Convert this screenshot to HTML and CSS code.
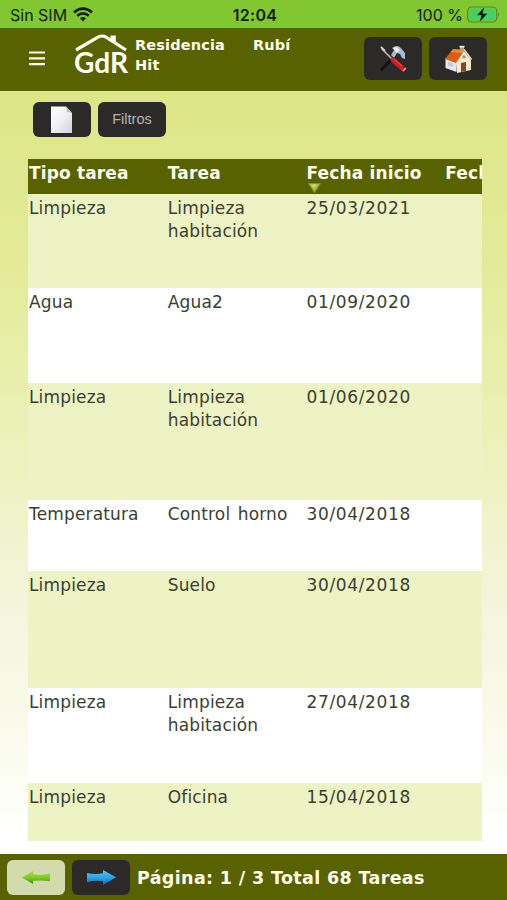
FILE: index.html
```
<!DOCTYPE html>
<html lang="es">
<head>
    <meta charset="UTF-8">
    <meta name="viewport" content="width=device-width, initial-scale=1.0">
    <title>GdR - Tareas</title>
    <link rel="stylesheet" href="styles.css">
</head>
<body>

    <div class="status">
        <div class="carrier">
            <span>Sin SIM</span>
            <svg width="20" height="15" viewBox="0 0 20 15" fill="none" stroke="#10230b" stroke-width="2.7">
                <path d="M1 5.4Q10-2.2 19 5.4"/>
                <path d="M4.2 8.8Q10 3.8 15.8 8.8"/>
                <path d="M7 11.2Q10 8.6 13 11.2L10 14.4z" fill="#10230b" stroke="none"/>
            </svg>
        </div>
        <div class="clock">12:04</div>
        <div class="battery">
            <span>100 %</span>
            <svg width="33" height="17" viewBox="0 0 33 17">
                <rect x=".7" y="1" width="29" height="15" rx="4" fill="#7cc532" stroke="#56892f" stroke-width="1.2"/>
                <rect x="2.5" y="2.8" width="25.4" height="11.4" rx="2.5" fill="#43d160"/>
                <path d="M31 6.2q2 2.3 0 4.6z" fill="#56892f"/>
                <path d="M18 0L9.5 9.5h4.8L12 17l8.8-9.7h-5z" fill="#0b1a0b" stroke="#7ddc78" stroke-width=".5"/>
            </svg>
        </div>
    </div>

    <header>
        <svg class="menu" width="16" height="15" viewBox="0 0 16 15" stroke="#fdfdea" stroke-width="2.2">
            <path d="M0 1.5h16M0 7.3h16M0 13.2h16"/>
        </svg>
        <svg class="logo" width="58" height="46" viewBox="0 0 58 46">
            <path d="M3 17L25 4.2Q29 1.8 33 4.2L53 17" fill="none" stroke="#fffff4" stroke-width="3.2"/>
            <path d="M37.5 2.5h5.3v9l-5.3-3.5z" fill="#fffff4"/>
            <text x="1" y="40" textLength="54" lengthAdjust="spacingAndGlyphs">GdR</text>
        </svg>
        <div class="center"><span class="first">Residencia</span><span>Rubí</span><br>Hit</div>
        <div class="btn tools">
            <svg width="28" height="28" viewBox="0 0 28 28">
                <path d="M2 25L16 11" stroke="#101113" stroke-width="3"/>
                <path d="M13 3q5-4 9 0l4 5v6l-3-1-2-4-3-1-3 5-3-3 3-5z" fill="#a9b8ca"/>
                <path d="M14 3l4-1 3 3-3 3z" fill="#eef3f7"/>
                <path d="M3 4L16 17" stroke="#b8bbbd" stroke-width="1.6"/>
                <path d="M2 2l4 4" stroke="#d4d4d4" stroke-width="1.8"/>
                <path d="M14 15l10 9" stroke="#cf1d20" stroke-width="5" stroke-linecap="round"/>
                <path d="M15 14l8 7" stroke="#e8463f" stroke-width="1.2"/>
                <path d="M24 26l3-3" stroke="#eca49b" stroke-width="1.4"/>
            </svg>
        </div>
        <div class="btn">
            <svg width="28" height="28" viewBox="0 0 28 28">
                <path d="M16 1h4v7h-4z" fill="#aaa49d"/>
                <path d="M15.5.8h5v1.8h-5z" fill="#ece9e3"/>
                <path d="M1.5 13l11 4v10l-11-4z" fill="#e6e5e9"/>
                <path d="M12 17l8-11 7 9v10l-14 3z" fill="#f8eacb"/>
                <path d="M9 4l11 1-8 13L1 14z" fill="#d95c19"/>
                <path d="M9 4l11 1-2 3L7 7z" fill="#f18b3a"/>
                <path d="M20 4.5l7.5 10" stroke="#f4d5b2" stroke-width="1.6"/>
                <path d="M17 18l5-1v9l-5 1z" fill="#844624"/>
                <path d="M18.5 10.5h3v3h-3z" fill="#7e9db7"/>
                <path d="M4 17l5 1.6v3.5L4 20.5z" fill="#c2cad9"/>
            </svg>
        </div>
    </header>

    <div class="toolbar">
        <div class="btn small">
            <svg width="22" height="28" viewBox="0 0 22 28">
                <defs>
                    <linearGradient id="paper" x1="0" y1="0" x2="1" y2="1">
                        <stop offset="0" stop-color="#fff"/>
                        <stop offset=".5" stop-color="#f0f1f5"/>
                        <stop offset="1" stop-color="#cfd2da"/>
                    </linearGradient>
                </defs>
                <path d="M0 .5H15L21 7v20H0z" fill="url(#paper)"/>
                <path d="M15 .5L21 7q-4-1-5-1z" fill="#b9bdc5"/>
            </svg>
        </div>
        <div class="btn small filtros">Filtros</div>
    </div>

    <div class="table-container">
        <table>
            <thead>
                <tr>
                    <th>Tipo tarea</th>
                    <th>Tarea</th>
                    <th>Fecha inicio
                        <svg class="sort" width="13" height="10" viewBox="0 0 13 10">
                            <path d="M.5.5h12L6.5 9.5z" fill="#a5bd45" stroke="#7d962b"/>
                            <path d="M2.5 1.5h7L6 5z" fill="#c9dc7b"/>
                        </svg>
                    </th>
                    <th>Fecha fin</th>
                </tr>
            </thead>
            <tbody>
                <tr class="alto"><td>Limpieza</td><td>Limpieza habitación</td><td class="fecha">25/03/2021</td><td></td></tr>
                <tr class="medio"><td>Agua</td><td>Agua2</td><td class="fecha">01/09/2020</td><td></td></tr>
                <tr class="grande"><td>Limpieza</td><td>Limpieza habitación</td><td class="fecha">01/06/2020</td><td></td></tr>
                <tr class="bajo"><td>Temperatura</td><td>Control horno</td><td class="fecha">30/04/2018</td><td></td></tr>
                <tr class="grande"><td>Limpieza</td><td>Suelo</td><td class="fecha">30/04/2018</td><td></td></tr>
                <tr class="medio"><td>Limpieza</td><td>Limpieza habitación</td><td class="fecha">27/04/2018</td><td></td></tr>
                <tr class="ultimo"><td>Limpieza</td><td>Oficina</td><td class="fecha">15/04/2018</td><td></td></tr>
            </tbody>
        </table>
    </div>

    <footer>
        <div class="btn small prev">
            <svg width="28" height="13" viewBox="0 0 28 13">
                <defs>
                    <linearGradient id="verde" x1="0" y1="0" x2="0" y2="1">
                        <stop offset="0" stop-color="#a5dc45"/>
                        <stop offset=".5" stop-color="#83cc20"/>
                        <stop offset="1" stop-color="#438e12"/>
                    </linearGradient>
                </defs>
                <path d="M0 6.5L11 0v3q8 2 17-.4v7.6q-8-1-17-.4V13z" fill="url(#verde)"/>
            </svg>
        </div>
        <div class="btn small next">
            <svg width="29" height="15" viewBox="0 0 29 15">
                <defs>
                    <linearGradient id="azul" x1="0" y1="0" x2="0" y2="1">
                        <stop offset="0" stop-color="#5bc3f3"/>
                        <stop offset=".5" stop-color="#2fa4e6"/>
                        <stop offset="1" stop-color="#1266ac"/>
                    </linearGradient>
                </defs>
                <path d="M0 3q8 2 16 .3V0l13 7.3L16 15v-3.8q-8-1-16 1z" fill="url(#azul)"/>
            </svg>
        </div>
        <span class="pagina">Página: 1 / 3 Total 68 Tareas</span>
    </footer>

</body>
</html>
```
FILE: styles.css
```
* {
    box-sizing: border-box;
}

body {
    margin: 0;
    height: 900px;
    display: flex;
    flex-direction: column;
    overflow: hidden;
    font-family: Verdana, "DejaVu Sans", sans-serif;
    color: #3b3f30;
    background: linear-gradient(#dce687 90px, #e3eb98 260px, #e8efac 380px, #edf3c4 490px, #f4f6df 630px, #fbfcef 760px, #fff 840px);
}

svg {
    display: block;
}

/* Barra de estado */
.status {
    display: grid;
    grid-template-columns: 1fr auto 1fr;
    align-items: center;
    height: 28px;
    padding: 1px 7px 0 10px;
    background: #82c632;
    font-family: Inter, sans-serif;
    font-size: 16px;
    color: #10230b;
}

.carrier, .battery {
    display: flex;
    align-items: center;
    gap: 6px;
}

.battery {
    justify-content: flex-end;
    gap: 4px;
}

.clock {
    font-weight: 600;
    letter-spacing: 0.3px;
}

/* Cabecera */
header {
    display: flex;
    height: 63px;
    padding: 9px 20px 0 29px;
    background: #586200;
}

.menu {
    margin-top: 14px;
}

.logo {
    margin: -4px 0 0 28px;
}

.logo text {
    font-family: Lato, sans-serif;
    font-size: 29px;
    font-weight: 700;
    fill: #fffff4;
}

.center {
    flex: 1;
    margin: -2px 0 0 4px;
    font-size: 14.5px;
    font-weight: bold;
    line-height: 20px;
    letter-spacing: 0.15px;
    color: #fdfdea;
    white-space: nowrap;
}

.first {
    display: inline-block;
    width: 118px;
}

.btn {
    display: flex;
    align-items: center;
    justify-content: center;
    width: 58px;
    height: 43px;
    border-radius: 6px;
    background: #2c2a29;
}

.tools {
    margin-right: 7px;
}

.small {
    height: 35px;
}

.toolbar {
    display: flex;
    gap: 7px;
    height: 68px;
    padding: 11px 33px;
}

.filtros {
    width: 68px;
    padding-bottom: 2px;
    font-family: "Liberation Sans", Arial, sans-serif;
    font-size: 14.5px;
    color: #b5b3b0;
}

/* Tabla de tareas */
.table-container {
    width: 454px;
    height: 682px;
    margin-left: 28px;
    overflow: hidden;
}

table {
    width: 555px;
    table-layout: fixed;
    border-collapse: collapse;
}

th, td {
    padding: 3px 1px 0;
    font-size: 17px;
    line-height: 23px;
    letter-spacing: 0.15px;
    word-spacing: 2px;
    text-align: left;
    vertical-align: top;
}

th {
    height: 35px;
    word-spacing: 0;
    background: #586200;
    color: #fdfdea;
    white-space: nowrap;
}

.fecha {
    letter-spacing: 0.65px;
}

.sort {
    margin: -2px 0 0 1px;
}

tbody tr:nth-child(odd) {
    background: #edf3c4;
}

tbody tr:nth-child(even) {
    background: #fff;
}

.alto { height: 94px; }
.medio { height: 95px; }
.grande { height: 117px; }
.bajo { height: 71px; }
.ultimo { height: 58px; }

/* Paginación */
footer {
    display: flex;
    align-items: center;
    height: 46px;
    margin-top: auto;
    padding: 1px 7px 0;
    background: #586200;
}

.prev {
    margin-right: 7px;
    background: #d3daae;
}

.pagina {
    margin-left: 7px;
    font-size: 17.5px;
    font-weight: bold;
    letter-spacing: 0.35px;
    color: #fdfdea;
    white-space: nowrap;
}
```
